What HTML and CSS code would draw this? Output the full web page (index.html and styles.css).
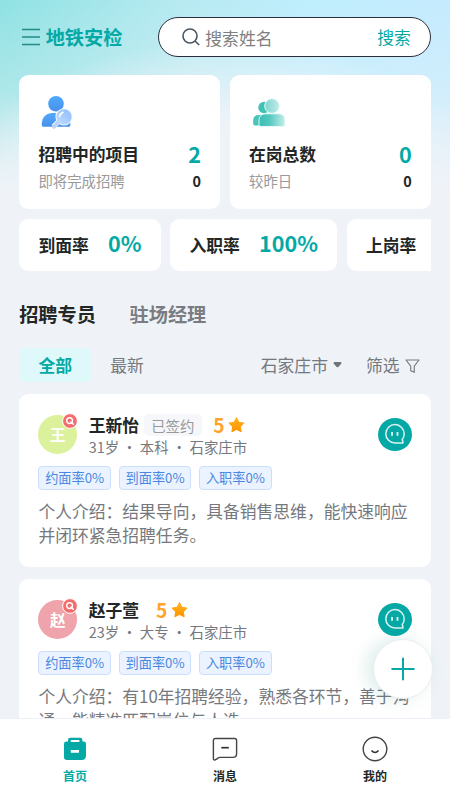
FILE: index.html
```html
<!DOCTYPE html>
<html lang="zh-CN">
<head>
<meta charset="utf-8">
<meta name="viewport" content="width=device-width, initial-scale=1">
<title>地铁安检</title>
<link rel="stylesheet" href="styles.css">
</head>
<body>
<svg class="defs" width="0" height="0" aria-hidden="true">
  <defs>
    <linearGradient id="blue" x1="0" y1="0" x2="0" y2="1"><stop offset="0" stop-color="#4faaff"/><stop offset="1" stop-color="#4a90e8"/></linearGradient>
    <linearGradient id="lens" x1="1" y1="0" x2="0" y2="1"><stop offset="0" stop-color="#8cbcfb"/><stop offset="1" stop-color="#c3ddff"/></linearGradient>
    <linearGradient id="teal" x1="0" y1="0" x2="1" y2="0"><stop offset="0" stop-color="#38bfb3"/><stop offset=".4" stop-color="#55c8bf"/><stop offset="1" stop-color="#c4eeea"/></linearGradient>
    <linearGradient id="head" x1="0" y1="0" x2="1" y2="0"><stop offset="0" stop-color="#7fd6cf"/><stop offset="1" stop-color="#c0ebe7"/></linearGradient>
    <linearGradient id="gold" x1="0" y1="0" x2="0" y2="1"><stop offset="0" stop-color="#ffb21e"/><stop offset="1" stop-color="#ff9500"/></linearGradient>
    <symbol id="star" viewBox="0 0 17 16"><path d="M8.5 1 10.7 5.4 15.6 6.1 12.1 9.6 12.9 14.5 8.5 12.2 4.1 14.5 4.9 9.6 1.4 6.1 6.3 5.4Z" fill="url(#gold)" stroke="url(#gold)" stroke-width="1.4" stroke-linejoin="round"/></symbol>
    <symbol id="seek" viewBox="0 0 16 16"><circle cx="8" cy="8" r="7.4" fill="#f56c6c" stroke="#fff" stroke-width="1"/><circle cx="7.6" cy="7.6" r="2.9" fill="none" stroke="#fff" stroke-width="1.4"/><path d="m9 9 2.3 2.3" stroke="#fff" stroke-width="1.6" stroke-linecap="round"/></symbol>
    <symbol id="chat" viewBox="0 0 34 33"><ellipse cx="17" cy="16.5" rx="17" ry="16.5" fill="#04a9a6"/><path d="M24.2 21.6Q26.2 19.4 26.2 16A9.2 9.2 0 1 0 17 25H25Q25 23.2 24.2 21.6Z" fill="none" stroke="#d9f3f2" stroke-width="1.5" stroke-linejoin="round"/><path d="M14 14v3.8M19.5 14v3.8" stroke="#e4f7f6" stroke-width="1.8"/></symbol>
  </defs>
</svg>
<div class="app">
  <header class="header">
    <svg class="menu" viewBox="0 0 18 18"><path d="M0 1.5h18M0 9h18M0 16.5h18" stroke="#238b88" stroke-width="1.4"/></svg>
    <h1 class="brand">地铁安检</h1>
    <div class="search">
      <svg class="search-icon" viewBox="0 0 18 18"><circle cx="8" cy="8" r="7" fill="none" stroke="#4a5560" stroke-width="1.6"/><path d="m13 13 4.2 4" stroke="#4a5560" stroke-width="1.6"/></svg>
      <span class="placeholder">搜索姓名</span>
      <span class="search-btn">搜索</span>
    </div>
  </header>

  <section class="summary">
    <article class="card total">
      <svg class="total-icon" viewBox="0 0 36 36"><circle cx="18" cy="9.8" r="7.8" fill="url(#blue)"/><path d="M3.8 31.5V29a10 10 0 0 1 10-10h9a10 10 0 0 1 9.5 11v1.3a1.5 1.5 0 0 1-1.5 1.5H5.3a1.5 1.5 0 0 1-1.5-1.3Z" fill="url(#blue)"/><path d="m21.5 26.5-6 6.3" stroke="#fff" stroke-width="5"/><circle cx="26" cy="22.8" r="8.6" fill="#eef6ff"/><path d="m21.5 26.5-5.4 6.2" stroke="#b9d6fc" stroke-width="4" stroke-linecap="round"/><circle cx="26" cy="22.8" r="7.6" fill="url(#lens)"/><path d="M21.5 22.5q.6-3 3.6-4.2" fill="none" stroke="#fff" stroke-width="1.5" stroke-linecap="round"/></svg>
      <div class="row"><span class="label">招聘中的项目</span><b class="value">2</b></div>
      <div class="row sub"><span>即将完成招聘</span><b>0</b></div>
    </article>
    <article class="card total">
      <svg class="total-icon" viewBox="0 0 36 36"><circle cx="15" cy="13.5" r="5.7" fill="#42c2b7"/><path d="M4.2 29.5V26a5 5 0 0 1 5-5H15V31.5H6a1.9 1.9 0 0 1-1.8-2Z" fill="#48c4b9"/><circle cx="23" cy="12" r="7.3" fill="url(#head)" stroke="#e8f9f7"/><path d="M10 30.5v-4.7a6 6 0 0 1 6-6h14a6 6 0 0 1 6 6v4.7a2 2 0 0 1-2 2H12a2 2 0 0 1-2-2Z" fill="url(#teal)" stroke="#e8f9f7"/></svg>
      <div class="row"><span class="label">在岗总数</span><b class="value">0</b></div>
      <div class="row sub"><span>较昨日</span><b>0</b></div>
    </article>
  </section>

  <section class="rates">
    <div class="card rate"><span class="label">到面率</span><b class="value">0%</b></div>
    <div class="card rate"><span class="label">入职率</span><b class="value">100%</b></div>
    <div class="card rate last"><span class="label">上岗率</span></div>
  </section>

  <nav class="tabs"><span class="tab active">招聘专员</span><span class="tab">驻场经理</span></nav>

  <div class="filters">
    <span class="chip">全部</span>
    <span class="newest">最新</span>
    <span class="city">石家庄市</span>
    <svg class="caret" viewBox="0 0 9 6"><path d="M1.5 0h6Q9 .3 8.2 1.7L5.3 5Q4.5 5.7 3.7 5L.8 1.7Q0 .3 1.5 0" fill="#6f7479"/></svg>
    <span class="sift">筛选</span>
    <svg class="funnel" viewBox="0 0 15 15"><path d="M1 1h13L9.3 7.1v6.2l-3.6-1.7V7.1Z" fill="none" stroke="#7b7f84" stroke-width="1.2" stroke-linejoin="round"/></svg>
  </div>

  <main class="people">
    <article class="card person">
      <div class="top">
        <div class="avatar lime">王<svg class="seek"><use href="#seek"/></svg></div>
        <div class="info">
          <div class="name-row"><b class="name">王新怡</b><span class="signed">已签约</span><b class="score">5</b><svg class="star"><use href="#star"/></svg></div>
          <div class="meta">31岁 ・ 本科 ・ 石家庄市</div>
        </div>
        <svg class="chat"><use href="#chat"/></svg>
      </div>
      <div class="badges"><span>约面率0%</span><span>到面率0%</span><span>入职率0%</span></div>
      <p class="intro">个人介绍：结果导向，具备销售思维，能快速响应并闭环紧急招聘任务。</p>
    </article>
    <article class="card person">
      <div class="top">
        <div class="avatar pink">赵<svg class="seek"><use href="#seek"/></svg></div>
        <div class="info">
          <div class="name-row"><b class="name">赵子萱</b><b class="score">5</b><svg class="star"><use href="#star"/></svg></div>
          <div class="meta">23岁 ・ 大专 ・ 石家庄市</div>
        </div>
        <svg class="chat"><use href="#chat"/></svg>
      </div>
      <div class="badges"><span>约面率0%</span><span>到面率0%</span><span>入职率0%</span></div>
      <p class="intro">个人介绍：有10年招聘经验，熟悉各环节，善于沟通，能精准匹配岗位与人选。</p>
    </article>
  </main>

  <div class="fab"><svg viewBox="0 0 24 24"><path d="M12 1.5v21M1.2 12h21.6" stroke="#04a9a6" stroke-width="2" stroke-linecap="round"/></svg></div>

  <footer class="tabbar">
    <div class="item current">
      <svg viewBox="0 0 26 26"><path fill-rule="evenodd" d="M6 5.6V4Q6 1.8 8.2 1.8H18.2Q20.4 1.8 20.4 4V5.6H21.6Q24 5.6 24 8V19.5Q24 24 19.5 24H4.4Q2 24 2 21.6V8Q2 5.6 4.4 5.6ZM8.8 6H17.4V4H8.8ZM8.8 14V16.7H17V14Z" fill="#04a9a6"/></svg>
      <span>首页</span>
    </div>
    <div class="item">
      <svg viewBox="0 0 26 26"><path d="M3.5 2.5H22.7Q24.6 2.5 24.6 4.5V17.8Q24.6 21.4 21 21.4H8Q6 21.4 4.6 23.2 1.8 25 1.4 23.2V4.5Q1.4 2.5 3.5 2.5Z" fill="none" stroke="#444" stroke-width="1.4"/><path d="M9.3 11.7h7.5" stroke="#333" stroke-width="1.7"/></svg>
      <span>消息</span>
    </div>
    <div class="item">
      <svg viewBox="0 0 26 26"><circle cx="13" cy="13" r="11.8" fill="none" stroke="#444" stroke-width="1.4"/><path d="M9.5 14.5Q13 18.5 16.5 14.5" fill="none" stroke="#333" stroke-width="1.6"/></svg>
      <span>我的</span>
    </div>
  </footer>
</div>
</body>
</html>
```
FILE: styles.css
```css
* { box-sizing: border-box; }
body {
  margin: 0;
  font-family: "Noto Sans CJK SC", sans-serif;
  font-size: 16.8px;
  line-height: 24px;
  color: #222625;
}
svg { display: block; flex: none; }
.defs { position: absolute; }
.app {
  position: relative;
  height: 800px;
  overflow: hidden;
  padding: 17px 19.2px 0;
  background:
    radial-gradient(ellipse 310px 215px at 50% 255px, #eff3f8 58%, rgba(239, 243, 248, 0) 100%),
    linear-gradient(180deg, rgba(239, 243, 248, 0) 0, rgba(239, 243, 248, .3) 90px, #eff3f8 190px),
    linear-gradient(90deg, #8fe2e3 0, #b6eaf1 40%, #bfeefd 70%, #c4ebfe 100%);
}
.card { background: #fff; border-radius: 9.6px; }
.label { font-weight: 700; white-space: nowrap; }
.value { font-size: 21.6px; color: #04a9a6; }

.header { display: flex; align-items: center; height: 40px; }
.menu { width: 18px; height: 18px; margin-left: 3px; margin-bottom: 1px; }
.brand { margin: 0 0 0 5.5px; font-size: 19.2px; color: #04a9a6; white-space: nowrap; }
.search {
  display: flex;
  align-items: center;
  width: 273px;
  height: 40px;
  margin-left: auto;
  padding: 0 19px 0 23px;
  border: 1px solid #2b2d3a;
  border-radius: 20px;
  background: #fff;
}
.search-icon { width: 18px; height: 18px; }
.placeholder { margin-left: 5.5px; color: #808080; padding-top: 2px; }
.search-btn { margin-left: auto; color: #04a9a6; }

.summary { display: grid; grid-template-columns: 1fr 1fr; gap: 9.6px; margin-top: 18px; }
.total { height: 134px; padding: 19px 19.2px 0; }
.total-icon { width: 36px; height: 36px; margin-bottom: 12px; }
.row { display: flex; justify-content: space-between; align-items: center; }
.sub { margin-top: 3px; font-size: 14.4px; color: #999; }
.sub b { color: #222625; }

.rates { display: flex; gap: 9.6px; margin-top: 10px; overflow: hidden; }
.rate { display: flex; flex: none; align-items: center; gap: 19.2px; height: 52px; padding: 0 19.2px; }
.rate .value { padding-bottom: 4px; }
.rate.last { width: 160px; }

.tabs { display: flex; gap: 33.6px; margin-top: 31px; font-size: 19.2px; font-weight: 700; }
.tab { color: #797c80; }
.tab.active { color: #222625; }

.filters { display: flex; align-items: center; height: 34px; margin-top: 22px; color: #75787d; }
.chip { padding: 5px 19.2px; border-radius: 5px; background: #dff9fb; color: #04a9a6; font-weight: 700; }
.newest { margin-left: 19.2px; }
.city { margin-left: auto; }
.caret { width: 9px; height: 6px; margin: 0 24px 0 5px; }
.funnel { width: 15px; height: 15px; margin: 2px 10.5px 0 5.8px; }

.people { display: grid; gap: 12px; margin-top: 12px; }
.person { height: 173px; padding: 20px 19.2px; }
.top { display: flex; height: 41px; }
.avatar {
  position: relative;
  width: 39px;
  height: 39px;
  margin-top: 1px;
  border-radius: 50%;
  color: #fff;
  font-size: 15.6px;
  font-weight: 700;
  line-height: 39px;
  text-align: center;
}
.lime { background: #dbf19b; }
.pink { background: #efa3aa; }
.seek { position: absolute; top: -2px; right: -1px; width: 16px; height: 16px; }
.info { margin-left: 11.3px; }
.name-row { display: flex; align-items: center; height: 22px; }
.signed { margin-left: 4.8px; padding: 1px 7.4px 0; border-radius: 5px; background: #f5f7fb; color: #999; font-size: 14.4px; line-height: 22px; height: 22px; }
.score { margin-left: 11.5px; font-size: 19.2px; color: #ffa32b; }
.name + .score { margin-left: 17px; }
.star { width: 17px; height: 16px; margin: 0 0 0 3.5px; }
.meta { font-size: 14.4px; line-height: 21px; color: #75787d; }
.chat { width: 34px; height: 33px; margin: 4px 0 0 auto; }
.badges { display: flex; gap: 7.8px; margin-top: 11px; }
.badges span {
  width: 72.6px;
  height: 24px;
  border: 1px solid #cbdffc;
  border-radius: 4px;
  background: #eaf3ff;
  color: #4a88e0;
  font-size: 13.2px;
  line-height: 22px;
  text-align: center;
  white-space: nowrap;
}
.intro { margin: 9px 0 0; color: #75787d; }

.fab {
  position: absolute;
  left: 373px;
  top: 639px;
  width: 60px;
  height: 60px;
  padding: 17px;
  border: 1px solid #e9edf3;
  border-radius: 50%;
  background: #fff;
  box-shadow: -6px 0 18px rgba(4, 130, 110, .15);
}
.fab svg { width: 24px; height: 24px; }

.tabbar {
  position: absolute;
  left: 0;
  right: 0;
  bottom: 0;
  display: flex;
  height: 82px;
  border-top: 1px solid #edf1f7;
  background: #fff;
}
.item { flex: 1; display: flex; flex-direction: column; align-items: center; padding-top: 17px; font-size: 12px; font-weight: 700; line-height: 18px; }
.item svg { width: 26px; height: 26px; margin-bottom: 5px; }
.current { color: #04a9a6; }
```
